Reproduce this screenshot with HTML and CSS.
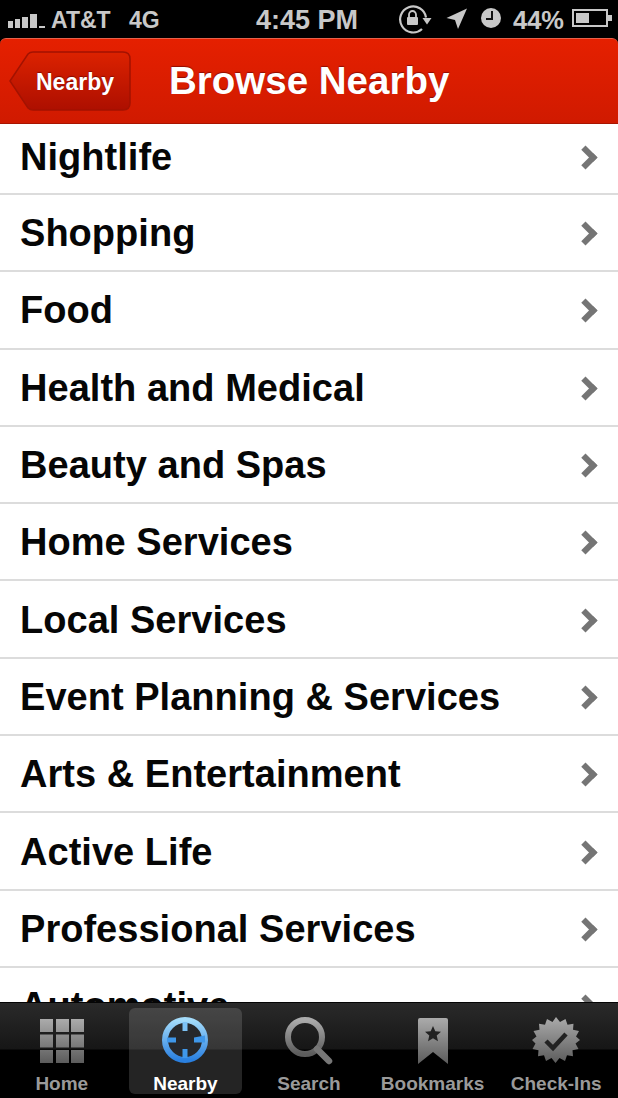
FILE: index.html
```html
<!DOCTYPE html>
<html lang="en">
<head>
    <meta charset="UTF-8">
    <meta name="viewport" content="width=device-width, initial-scale=1.0">
    <title>Browse Nearby</title>
    <link rel="stylesheet" href="styles.css">
</head>
<body>
    <div class="phone">
        <div class="status-bar">
            <svg class="signal" width="38" height="16" viewBox="0 0 38 16">
                <rect x="0" y="8" width="5" height="7" fill="#c8c8c8"/>
                <rect x="7" y="6" width="5" height="9" fill="#c8c8c8"/>
                <rect x="14" y="4" width="6" height="11" fill="#c8c8c8"/>
                <rect x="22" y="1" width="7" height="14" fill="#c8c8c8"/>
                <rect x="31" y="13" width="6" height="2" fill="#c8c8c8"/>
            </svg>
            <span class="carrier">AT&amp;T</span>
            <span class="network">4G</span>
            <span class="clock">4:45 PM</span>
            <svg class="lock" width="34" height="32" viewBox="0 0 34 32">
                <path d="M28 13.500A13 13 0 1 0 24 25" fill="none" stroke="#c8c8c8" stroke-width="2.200"/>
                <path d="M24.500 14h9L29 20.500z" fill="#c8c8c8"/>
                <rect x="9" y="13" width="11" height="8" rx="1" fill="#c8c8c8"/>
                <path d="M11 13v-2.500a3.500 3.500 0 0 1 7 0V13" fill="none" stroke="#c8c8c8" stroke-width="1.800"/>
            </svg>
            <svg class="arrow" width="22" height="24" viewBox="0 0 22 24">
                <path d="M21 .5.500 10 9 12l3 9z" fill="#c8c8c8"/>
            </svg>
            <svg class="alarm" width="20" height="20" viewBox="0 0 20 20">
                <circle cx="10" cy="10" r="10" fill="#c8c8c8"/>
                <path d="M11 3v8H5" fill="none" stroke="#111" stroke-width="2"/>
            </svg>
            <span class="percent">44%</span>
            <svg class="battery" width="41" height="18" viewBox="0 0 41 18">
                <rect x="1" y="1" width="34" height="16" fill="none" stroke="#c8c8c8" stroke-width="2"/>
                <rect x="4" y="4" width="13" height="10" fill="#c8c8c8"/>
                <rect x="36" y="6" width="4" height="6" fill="#c8c8c8"/>
            </svg>
        </div>

        <div class="nav-bar">
            <a class="back-btn">
                <svg class="back-shape" width="122" height="60" viewBox="0 0 122 60">
                    <defs>
                        <linearGradient id="backFill" x1="0" y1="0" x2="0" y2="1">
                            <stop offset="0" stop-color="#dc2200"/>
                            <stop offset="1" stop-color="#ad0f00"/>
                        </linearGradient>
                    </defs>
                    <path d="M1 30 19 3q2-2 5-2h90q7 0 7 7v44q0 7-7 7H24q-3 0-5-2z" fill="url(#backFill)" stroke="#a31200" stroke-width="1.500"/>
                </svg>
                <span class="back-label">Nearby</span>
            </a>
            <h1>Browse Nearby</h1>
        </div>

        <ul class="category-list">
            <li class="first">Nightlife<span class="chevron"></span></li>
            <li>Shopping<span class="chevron"></span></li>
            <li>Food<span class="chevron"></span></li>
            <li>Health and Medical<span class="chevron"></span></li>
            <li>Beauty and Spas<span class="chevron"></span></li>
            <li>Home Services<span class="chevron"></span></li>
            <li>Local Services<span class="chevron"></span></li>
            <li>Event Planning &amp; Services<span class="chevron"></span></li>
            <li>Arts &amp; Entertainment<span class="chevron"></span></li>
            <li>Active Life<span class="chevron"></span></li>
            <li>Professional Services<span class="chevron"></span></li>
            <li>Automotive<span class="chevron"></span></li>
        </ul>

        <div class="tab-bar">
            <svg class="gradients" width="0" height="0">
                <defs>
                    <linearGradient id="tabGrey" x1="0" y1="0" x2="0" y2="1">
                        <stop offset="0" stop-color="#ababab"/>
                        <stop offset="1" stop-color="#5c5c5c"/>
                    </linearGradient>
                    <linearGradient id="tabBlue" x1="0" y1="0" x2="0" y2="1">
                        <stop offset="0" stop-color="#a4dcfb"/>
                        <stop offset="1" stop-color="#2a80e0"/>
                    </linearGradient>
                </defs>
            </svg>
            <div class="tab">
                <svg class="icon-low" width="46" height="46" viewBox="0 0 46 46">
                    <path fill="url(#tabGrey)" d="M1 1h13v13H1zM17 1h13v13H17zM32 1h13v13H32zM1 16.500h13v13H1zM17 16.500h13v13H17zM32 16.500h13v13H32zM1 32h13v13H1zM17 32h13v13H17zM32 32h13v13H32z"/>
                </svg>
                <span>Home</span>
            </div>
            <div class="tab active">
                <svg class="icon-high" width="48" height="48" viewBox="0 0 48 48">
                    <circle cx="24" cy="24" r="20" fill="#26282c" stroke="url(#tabBlue)" stroke-width="6"/>
                    <path fill="#7cc2f6" d="M21.500 6h5v9h-5z"/>
                    <path fill="#3f97ea" d="M21.500 33h5v9h-5zM6 21.500h9v5H6zM33 21.500l11-2v7H33z"/>
                </svg>
                <span>Nearby</span>
            </div>
            <div class="tab">
                <svg width="48" height="48" viewBox="0 0 48 48">
                    <circle cx="20" cy="20" r="17" fill="none" stroke="url(#tabGrey)" stroke-width="6"/>
                    <path d="M32 32 44 44" stroke="#777" stroke-width="6.500" stroke-linecap="round"/>
                </svg>
                <span>Search</span>
            </div>
            <div class="tab">
                <svg width="32" height="48" viewBox="0 0 32 48">
                    <path fill="url(#tabGrey)" d="M1 3q0-2 2-2h26q2 0 2 2v44L16 35 1 47z"/>
                    <path fill="#222" d="m16 9 2.300 5.300 5.700.5-4.300 3.800 1.300 5.600-5-3-5 3 1.300-5.600L8 14.800l5.700-.5z"/>
                </svg>
                <span>Bookmarks</span>
            </div>
            <div class="tab">
                <svg class="icon-high" width="48" height="48" viewBox="0 0 48 48">
                    <path fill="url(#tabGrey)" d="m24 1 4 5 5.500-3 2 5.700 6-1-.5 6.100 6 1.200-3 5.400L48 24l-4.500 3.600 3 5.400-6 1.200.5 6.100-6-1-2 5.700-5.500-3-4 5-4-5-5.500 3-2-5.700-6 1 .5-6.100-6-1.200 3-5.400L0 24l4.500-3.600-3-5.400 6-1.200-.5-6.100 6 1 2-5.700 5.500 3z"/>
                    <path d="m14 25 7 7 13-14" fill="none" stroke="#222" stroke-width="4.500"/>
                </svg>
                <span>Check-Ins</span>
            </div>
        </div>
    </div>
</body>
</html>
```

FILE: styles.css
```css
* {
    margin: 0;
    padding: 0;
    box-sizing: border-box;
}

body {
    font-family: "Liberation Sans", Arial, sans-serif;
    background: #000;
}

.phone {
    width: 618px;
    height: 1098px;
    display: flex;
    flex-direction: column;
    overflow: hidden;
    background: #000;
}

/* status bar */
.status-bar {
    height: 38px;
    flex: none;
    display: flex;
    align-items: center;
    padding: 2px 0 0 8px;
    color: #c8c8c8;
    font-weight: bold;
}

.signal {
    margin: 2px 5px 0 0;
}

.carrier {
    font-size: 23px;
    width: 78px;
}

.network {
    font-size: 23px;
    width: 127px;
}

.clock {
    font-size: 27px;
    width: 142px;
}

.lock {
    margin-right: 14px;
}

.arrow {
    margin-right: 13px;
}

.alarm {
    margin: 0 12px 4px 0;
}

.percent {
    font-size: 25.500px;
    width: 59px;
}

.battery {
    margin-bottom: 4px;
}

/* nav bar */
.nav-bar {
    height: 85px;
    flex: none;
    display: flex;
    align-items: center;
    padding-left: 9px;
    background: linear-gradient(#e52000, #d01a00);
    border-top: 1px solid #e8604a;
    border-radius: 6px 6px 0 0;
}

.back-btn {
    position: relative;
    width: 122px;
    height: 60px;
    margin-right: 38px;
    display: flex;
    align-items: center;
}

.back-shape {
    position: absolute;
    left: 0;
    top: 0;
}

.back-label {
    position: relative;
    margin: 2px 0 0 27px;
    color: #fff;
    font-size: 23px;
    font-weight: bold;
    text-shadow: 0 -1px 1px rgba(90, 0, 0, 0.6);
}

h1 {
    color: #fff;
    font-size: 38.500px;
    font-weight: bold;
    text-shadow: 0 -1px 1px rgba(90, 0, 0, 0.6);
}

/* list */
.category-list {
    flex: 1;
    min-height: 0;
    overflow: hidden;
    list-style: none;
    background: #fff;
    border-top: 1px solid #a81400;
}

.category-list li {
    height: 77.300px;
    display: flex;
    align-items: center;
    justify-content: space-between;
    padding: 2px 22px 0 20px;
    font-size: 38px;
    font-weight: bold;
    letter-spacing: 0.03px;
    color: #060606;
    border-bottom: 2px solid #dcdcdc;
}

.category-list li.first {
    height: 71px;
    padding-top: 0;
    padding-bottom: 3px;
}

.chevron {
    width: 17px;
    height: 17px;
    margin-right: 2px;
    border-top: 6px solid #757575;
    border-right: 6px solid #757575;
    transform: rotate(45deg);
}

/* tab bar */
.tab-bar {
    height: 96px;
    flex: none;
    display: flex;
    padding: 5px 0 4px;
    background: linear-gradient(#2a2a2a 0, #161616 46px, #000 47px);
    border-top: 1px solid #050505;
}

.gradients {
    position: absolute;
}

.tab {
    flex: 1;
    display: flex;
    flex-direction: column;
    align-items: center;
    justify-content: space-between;
    padding-top: 9px;
    margin: 0 5px;
    color: #9a9a9a;
    font-size: 19px;
    line-height: 20px;
    font-weight: bold;
    white-space: nowrap;
    border-radius: 6px;
}

.tab.active {
    color: #fff;
    background: rgba(255, 255, 255, 0.14);
}

.icon-low {
    margin-top: 1px;
}

.icon-high {
    margin-top: -1px;
}
```
